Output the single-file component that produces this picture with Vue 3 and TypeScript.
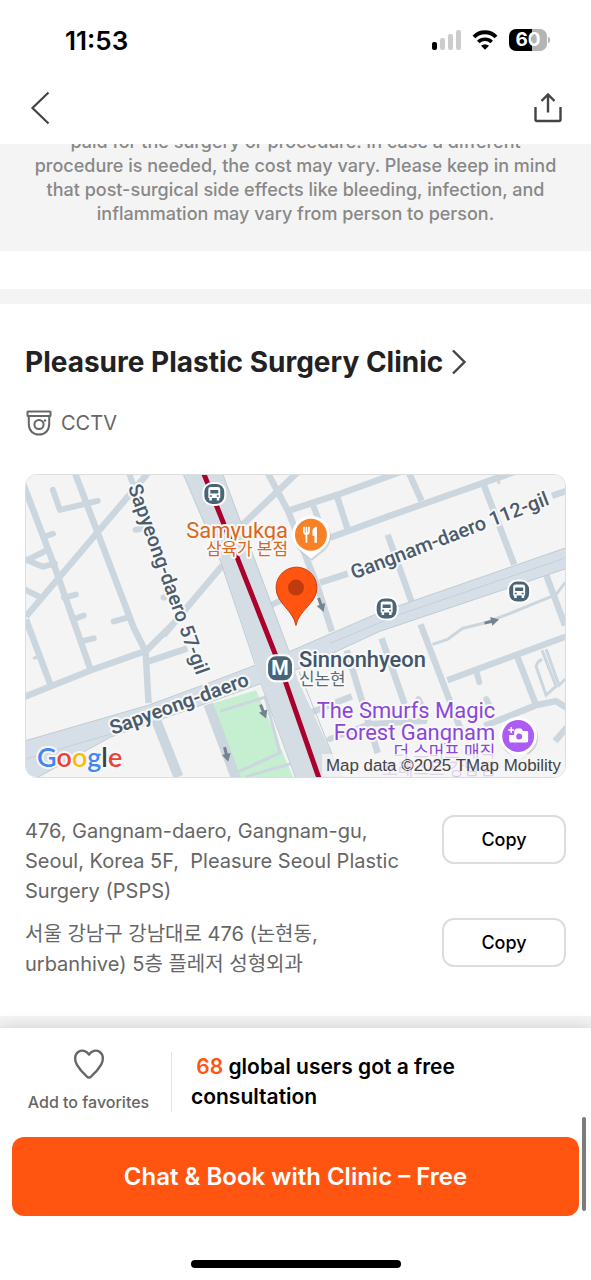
<script setup lang="ts">
interface Address {
  id: string
  lang: string
  lines: string[]
}

const clinic = 'Pleasure Plastic Surgery Clinic'
const favourites = 68

const notice: string[] = [
  'paid for the surgery or procedure. In case a different',
  'procedure is needed, the cost may vary. Please keep in mind',
  'that post-surgical side effects like bleeding, infection, and',
  'inflammation may vary from person to person.',
]

const addresses: Address[] = [
  {
    id: 'en',
    lang: 'en',
    lines: ['476, Gangnam-daero, Gangnam-gu,', 'Seoul, Korea 5F,\u00a0 Pleasure Seoul Plastic', 'Surgery (PSPS)'],
  },
  { id: 'ko', lang: 'ko', lines: ['서울 강남구 강남대로 476 (논현동,', 'urbanhive) 5층 플레저 성형외과'] },
]

const streets: string[] = [
  'M73 470L133 628L145 652L148 704',
  'M150 470L25 617',
  'M20 478L53 565L90 671',
  'M173 624L145 652M163 636L222 566M240 527L300 470',
  'M25 620L50 687',
  'M20 699L90 671L144 652M148 662L187 649',
  'M266 470L288 511L318 588L332 632',
  'M288 511L337 495L420 465M330 538L390 516L515 472',
  'M337 496L348 530M408 470L422 501M483 481L515 565M388 535L413 605',
  'M320 583L348 574M553 496L570 490',
  'M547 575L566 626M421 625L462 732M382 639L405 705',
  'M347 651L378 754M310 714L352 697M448 681L570 636M518 657L537 706',
  'M485 727L537 706L557 702L570 710M556 742L570 726',
]

const lanes: string[] = [
  'M52 490L59 510L97 501',
  'M43 537L52 534M27 560L45 551M25 560L42 567L54 564M24 590L40 598M63 598L75 595M72 620L83 616',
  'M113 622L128 618M128 472L132 483M135 530L144 528M163 598L164 598M80 642L93 639',
  'M313 505L318 518M270 606L281 601M477 672L480 683M419 700L421 704M487 700L490 706',
  'M330 740L370 725L425 722',
]

const paths: string[] = [
  'M433 645L448 640L463 629L487 623L513 613L557 595L566 583',
  'M543 651L557 687L547 696L537 667Q538 662 543 660M547 650L560 686L566 680',
  'M498 477L500 484M32 659L37 658',
]

const arrows: string[] = [
  'translate(321 605) rotate(70)',
  'translate(492 622) rotate(-14)',
  'translate(263 712) rotate(68)',
  'translate(226 755) rotate(76)',
]

const stops: string[] = ['translate(214 494)', 'translate(387 609)', 'translate(520 592)']

async function copy(address: Address): Promise<void> {
  await navigator.clipboard?.writeText(address.lines.join(' '))
}
</script>

<template>
  <main class="page">
    <header class="top">
      <div class="status">
        <span class="clock">11:53</span>
        <span class="indicators">
          <svg width="30" height="22" viewBox="0 0 30 22" aria-hidden="true">
            <rect x="1" y="13" width="5" height="8" rx="2" fill="#000" />
            <rect x="9" y="9" width="5" height="12" rx="2" fill="#ccc" />
            <rect x="17" y="5" width="5" height="16" rx="2" fill="#ccc" />
            <rect x="25" y="1" width="5" height="20" rx="2" fill="#ccc" />
          </svg>
          <svg width="26" height="22" viewBox="0 0 26 22" aria-hidden="true">
            <path d="M2 8C8 1.600 18 1.600 24 8" fill="none" stroke="#000" stroke-width="4" />
            <path d="M6.300 13C10 9.300 16 9.300 19.700 13" fill="none" stroke="#000" stroke-width="3.600" />
            <path d="M13 20.800L9 16.800Q13 13.800 17 16.800Z" fill="#000" />
          </svg>
          <span class="battery"><span class="level">60</span></span>
        </span>
      </div>
      <nav class="nav">
        <button class="icon" type="button" aria-label="Back">
          <svg width="22" height="36" viewBox="0 0 22 36">
            <path d="M18.500 2.500L2.500 18L18.500 33.500" fill="none" stroke="#444" stroke-width="2.200" />
          </svg>
        </button>
        <button class="icon" type="button" aria-label="Share">
          <svg width="30" height="32" viewBox="0 0 30 32">
            <path d="M2.500 15V27.500Q2.500 29 4 29H26Q27.500 29 27.500 27.500V15M15 20.500V2.500M8.500 9L15 2.500L21.500 9" fill="none" stroke="#444" stroke-width="2.400" />
          </svg>
        </button>
      </nav>
    </header>

    <section class="notice">
      <p><template v-for="(line, i) in notice" :key="i"><br v-if="i > 0">{{ line }}</template></p>
    </section>
    <div class="divider"></div>

    <section class="clinic">
      <h1>
        <a class="name" href="#clinic">{{ clinic }}
          <svg width="16" height="26" viewBox="0 0 16 26" aria-hidden="true">
            <path d="M2 1.500L13.500 13L2 24.500" fill="none" stroke="#444" stroke-width="2.400" />
          </svg>
        </a>
      </h1>
      <p class="feature">
        <svg width="28" height="26" viewBox="-1 0 28 26" fill="none" stroke="#666" stroke-width="2" aria-hidden="true">
          <rect x="1.500" y="1.500" width="23" height="4.500" rx="0.500" />
          <path d="M2.800 6V14C2.800 20.500 7 24.500 13 24.500S23.200 20.500 23.200 14V6" />
          <circle cx="13" cy="14.500" r="4.600" />
          <circle cx="19" cy="10.500" r="1.200" fill="#666" stroke="none" />
        </svg>
        <span>CCTV</span>
      </p>

      <div class="map">
        <svg viewBox="25 475 541 303" role="img" aria-label="Map of the clinic near Sinnonhyeon station">
          <rect x="25" y="475" width="541" height="303" fill="#f4f4f4" />
          <path d="M213 704L256 691L293 778H237Z" fill="#c5efd0" />
          <g fill="none" stroke="#ccd6de" stroke-width="6.500">
            <path v-for="d in streets" :key="d" :d="d" />
          </g>
          <g fill="none" stroke="#ccd6de" stroke-width="6" stroke-linecap="round" stroke-linejoin="round">
            <path v-for="d in lanes" :key="d" :d="d" />
          </g>
          <g fill="none" stroke="#ccd6de" stroke-width="3">
            <path v-for="d in paths" :key="d" :d="d" />
            <path d="M220 712L265 698L280 754L238 773M245 778L290 765" />
          </g>
          <path d="M156 722L178 778M208 705L236 780" fill="none" stroke="#ccd6de" stroke-width="10" />
          <path d="M20 743L148 706L205 685L255 666L290 652L380 613L570 547V568L380 632L300 669L262 684L215 701L110 738L34 780H20Z" fill="#d6dfe7" stroke="#bfcbd2" stroke-width="1" />
          <path d="M25 760L110 735L205 695M330 644L400 615L570 557" fill="none" stroke="#c4cfd6" stroke-width="1" />
          <path d="M181 470L220 561L256 666L262 686L296 780H343L333 757L298 681L289 652L221 470Z" fill="#d4dde4" />
          <path d="M181 470L220 561L255 665M261 685L296 780M221 470L289 652M299 672L333 757L343 780" fill="none" stroke="#bfcbd2" stroke-width="1" />
          <path d="M202 470L237 558L280 667L320 782" fill="none" stroke="#a9002c" stroke-width="5" />
          <g fill="#758391">
            <path v-for="t in arrows" :key="t" :transform="t" d="M-7 -1.500H0V-4.500L8 0L0 4.500V1.500H-7Z" />
          </g>

          <g v-for="t in stops" :key="t" :transform="t">
            <rect x="-12" y="-12" width="24" height="24" rx="10" fill="#fff" />
            <rect x="-10" y="-10" width="20" height="20" rx="8" fill="#4a6375" />
            <path d="M-6 -4.500Q-6 -7 -3.500 -7H3.500Q6 -7 6 -4.500V4H5V6.500H2.500V4H-2.500V6.500H-5V4H-6Z" fill="#fff" />
            <path d="M-4 -4H4V-0.500H-4ZM-4.500 1.200H-2.500V2.800H-4.500ZM2.500 1.200H4.500V2.800H2.500Z" fill="#4a6375" />
          </g>

          <g>
            <path d="M311 559L301 551A19 19 0 1 1 321 551Z" fill="#aab3ba" opacity="0.500" transform="translate(1 2)" />
            <path d="M311 559L301 551A19 19 0 1 1 321 551Z" fill="#fff" />
            <circle cx="311" cy="535" r="16" fill="#f98125" />
            <path d="M304 527V532Q304 534 306.500 534.500V543M306.500 527V534M309 527V532Q309 534 306.500 534.500" fill="none" stroke="#fff" stroke-width="1.700" />
            <path d="M317 543H314.500V536H312.500V531Q313 527.500 317 527Z" fill="#fff" />
          </g>
          <g>
            <path d="M519 762L509 753A19 19 0 1 1 529 753Z" fill="#aab3ba" opacity="0.500" transform="translate(1 2)" />
            <path d="M519 762L509 753A19 19 0 1 1 529 753Z" fill="#fff" />
            <circle cx="519" cy="737" r="16" fill="#ac5cf5" />
            <path d="M515 732L517 729.500H522L524 732H528Q529 732 529 733V742Q529 743.500 527.500 743.500H511.500Q510 743.500 510 742V736H515Z" fill="#fff" />
            <circle cx="520" cy="737.500" r="3" fill="#ac5cf5" />
            <path d="M512 728V734M509 731H515" stroke="#fff" stroke-width="1.500" />
          </g>
          <path d="M296 626C293 610 276 604 276 588A20.500 20.500 0 0 1 317 588C317 604 299 610 296 626Z" fill="#ff5511" stroke="#c93c0d" stroke-width="1" />
          <circle cx="296" cy="588" r="8" fill="#bf3a0c" />

          <g>
            <rect x="266" y="655" width="28" height="28" rx="9" fill="#fff" />
            <rect x="268" y="657" width="24" height="24" rx="8" fill="#4a6375" />
            <text x="280" y="676" class="metro" text-anchor="middle">M</text>
          </g>

          <text class="road" transform="translate(127 487) rotate(70)">Sapyeong-daero 57-gil</text>
          <text class="road" transform="translate(354 580) rotate(-21)">Gangnam-daero 112-gil</text>
          <text class="road strong" transform="translate(112 736) rotate(-20)">Sapyeong-daero</text>
          <text class="place food" x="288" y="538" text-anchor="end">Samyukga</text>
          <text class="hangul food" x="288" y="555" text-anchor="end">삼육가 본점</text>
          <text class="place station" x="299" y="668">Sinnonhyeon</text>
          <text class="hangul grey" x="299" y="686">신논현</text>
          <text class="place sight" x="496" y="719" text-anchor="end">The Smurfs Magic</text>
          <text class="place sight" x="496" y="741" text-anchor="end">Forest Gangnam</text>
          <text class="hangul sight" x="496" y="759" text-anchor="end">더 스머프 매직</text>
          <text class="hangul sight" x="496" y="776" text-anchor="end">포레스트 강남점</text>
          <rect x="322" y="755" width="244" height="23" fill="#f5f5f5" opacity="0.800" />
          <text class="credit" x="562" y="772" text-anchor="end">Map data ©2025 TMap Mobility</text>
          <text class="google" x="36" y="768"><tspan fill="#4285f4">G</tspan><tspan fill="#ea4335">o</tspan><tspan fill="#fbbc04">o</tspan><tspan fill="#4285f4">g</tspan><tspan fill="#3c4043">l</tspan><tspan fill="#ea4335">e</tspan></text>
        </svg>
      </div>

      <ul class="addresses">
        <li v-for="address in addresses" :key="address.id">
          <address :lang="address.lang"><template v-for="(line, i) in address.lines" :key="i"><br v-if="i > 0">{{ line }}</template></address>
          <button class="copy" type="button" @click="copy(address)">Copy</button>
        </li>
      </ul>
    </section>
    <div class="gap"></div>

    <footer class="bar">
      <div class="summary">
        <button class="favourite" type="button">
          <svg width="32" height="32" viewBox="0 0 32 32" aria-hidden="true">
            <path d="M16 6.500C13.500 2.800 9 1.400 5.500 3.800C1.500 6.500 1.300 12 3.700 16.300C6 20.400 10.500 25.500 14 28.700Q16 30.300 18 28.700C21.500 25.500 26 20.400 28.300 16.300C30.700 12 30.500 6.500 26.500 3.800C23 1.400 18.500 2.800 16 6.500Z" fill="none" stroke="#666" stroke-width="2.400" stroke-linejoin="round" />
          </svg>
          <span>Add to favorites</span>
        </button>
        <p class="users">&nbsp;<b>{{ favourites }}</b> global users got a free<br>consultation</p>
      </div>
      <button class="cta" type="button">Chat &amp; Book with Clinic – Free</button>
      <div class="home"></div>
      <div class="scroll"></div>
    </footer>
  </main>
</template>

<style>
body {
  margin: 0;
  background: #fff;
}
</style>

<style scoped>
.page {
  display: flex;
  flex-direction: column;
  min-height: 100vh;
  background: #fff;
  color: #000;
  font-family: Inter, "Noto Sans CJK KR", sans-serif;
}
button {
  border: 0;
  padding: 0;
  background: none;
  color: inherit;
  font: inherit;
  cursor: pointer;
}
svg {
  display: block;
}
.top {
  height: 144px;
  background: #fff;
}
.status {
  display: flex;
  justify-content: space-between;
  align-items: center;
  height: 80px;
  padding: 0 44px 0 65px;
}
.clock {
  font-size: 26px;
  font-weight: 600;
}
.indicators {
  display: flex;
  align-items: center;
  gap: 11px;
}
.battery {
  position: relative;
  width: 38px;
  height: 22px;
  border-radius: 7px;
  background: linear-gradient(90deg, #000 60%, #b4b4b4 60%);
}
.battery::after {
  content: "";
  position: absolute;
  top: 8px;
  right: -3px;
  width: 2px;
  height: 6px;
  border-radius: 0 2px 2px 0;
  background: #b4b4b4;
}
.level {
  display: block;
  color: #fff;
  font-size: 19px;
  font-weight: 700;
  line-height: 22px;
  text-align: center;
}
.nav {
  display: flex;
  justify-content: space-between;
  align-items: center;
  height: 56px;
  padding: 0 28px 0 30px;
}
.notice {
  display: flex;
  justify-content: center;
  overflow: hidden;
  padding: 0 16px 25px;
  background: #f4f4f4;
}
.notice p {
  margin: -14px 0 0;
  color: #888;
  font-size: 18px;
  font-weight: 500;
  line-height: 24px;
  text-align: center;
}
.divider {
  height: 15px;
  margin-top: 38px;
  background: #f4f4f4;
}
.clinic {
  padding: 40px 25px 37px;
}
h1 {
  margin: 0;
  font-size: 28px;
  font-weight: 700;
  line-height: 36px;
}
.name {
  display: flex;
  align-items: center;
  gap: 8px;
  color: #222;
  text-decoration: none;
}
.feature {
  display: flex;
  align-items: center;
  gap: 8px;
  margin: 28px 0 36px;
  color: #666;
  font-size: 20px;
  line-height: 30px;
}
.map {
  overflow: hidden;
  border: 1px solid #ddd;
  border-radius: 12px;
}
.map svg {
  width: 100%;
}
.map text {
  font-family: Roboto, "Noto Sans CJK KR", sans-serif;
  stroke: #f8f8f8;
  stroke-width: 4px;
  stroke-linejoin: round;
  paint-order: stroke;
}
.road {
  fill: #4b5b6b;
  font-size: 20px;
  font-weight: 500;
}
.map .strong {
  font-weight: 600;
}
.place {
  font-size: 22px;
}
.hangul {
  font-size: 17px;
}
.food {
  fill: #d9681d;
}
.sight {
  fill: #8b46d8;
}
.station {
  fill: #405668;
  font-weight: 500;
}
.grey {
  fill: #5d6a75;
}
.map .metro {
  fill: #fff;
  stroke: none;
  font-size: 20px;
  font-weight: 700;
}
.map .credit {
  fill: #444;
  stroke: none;
  font-size: 17px;
  font-family: "Liberation Sans", sans-serif;
}
.map .google {
  font-family: Lato, sans-serif;
  font-size: 27px;
  font-weight: 600;
}
.addresses {
  display: grid;
  gap: 12px;
  margin: 37px 0 0;
  padding: 0;
  list-style: none;
}
.addresses li {
  display: flex;
  justify-content: space-between;
  align-items: flex-start;
}
address {
  padding-top: 1px;
  color: #666;
  font-size: 20px;
  font-style: normal;
  line-height: 30px;
}
.copy {
  width: 124px;
  height: 49px;
  border: 2px solid #ddd;
  border-radius: 12px;
  font-size: 18px;
  font-weight: 500;
}
.gap {
  flex: 1;
  min-height: 12px;
  background: #f4f4f4;
}
.bar {
  position: sticky;
  bottom: 0;
  padding: 24px 12px 12px;
  background: #fff;
  box-shadow: 0 0 16px rgba(0, 0, 0, 0.16);
}
.summary {
  display: flex;
  align-items: center;
}
.favourite {
  display: flex;
  flex-direction: column;
  align-items: center;
  justify-content: space-between;
  width: 160px;
  height: 60px;
  padding: 0 18px 0 12px;
  border-right: 1px solid #e4e4e4;
  color: #666;
  font-size: 16px;
  font-weight: 500;
  line-height: 20px;
  white-space: nowrap;
}
.favourite svg {
  margin-top: -4px;
}
.users {
  margin: 0 0 0 19px;
  font-size: 21px;
  font-weight: 600;
  line-height: 30px;
}
.users b {
  color: #ff5511;
  font-weight: 600;
}
.cta {
  display: block;
  width: 100%;
  height: 79px;
  margin-top: 25px;
  border-radius: 12px;
  background: #ff5511;
  color: #fff;
  font-size: 24px;
  font-weight: 600;
}
.home {
  width: 210px;
  height: 8px;
  margin: 44px auto 0;
  border-radius: 4px;
  background: #000;
}
.scroll {
  position: absolute;
  right: 5px;
  bottom: 69px;
  width: 4px;
  height: 94px;
  border-radius: 2px;
  background: #7c7c7c;
}
</style>
